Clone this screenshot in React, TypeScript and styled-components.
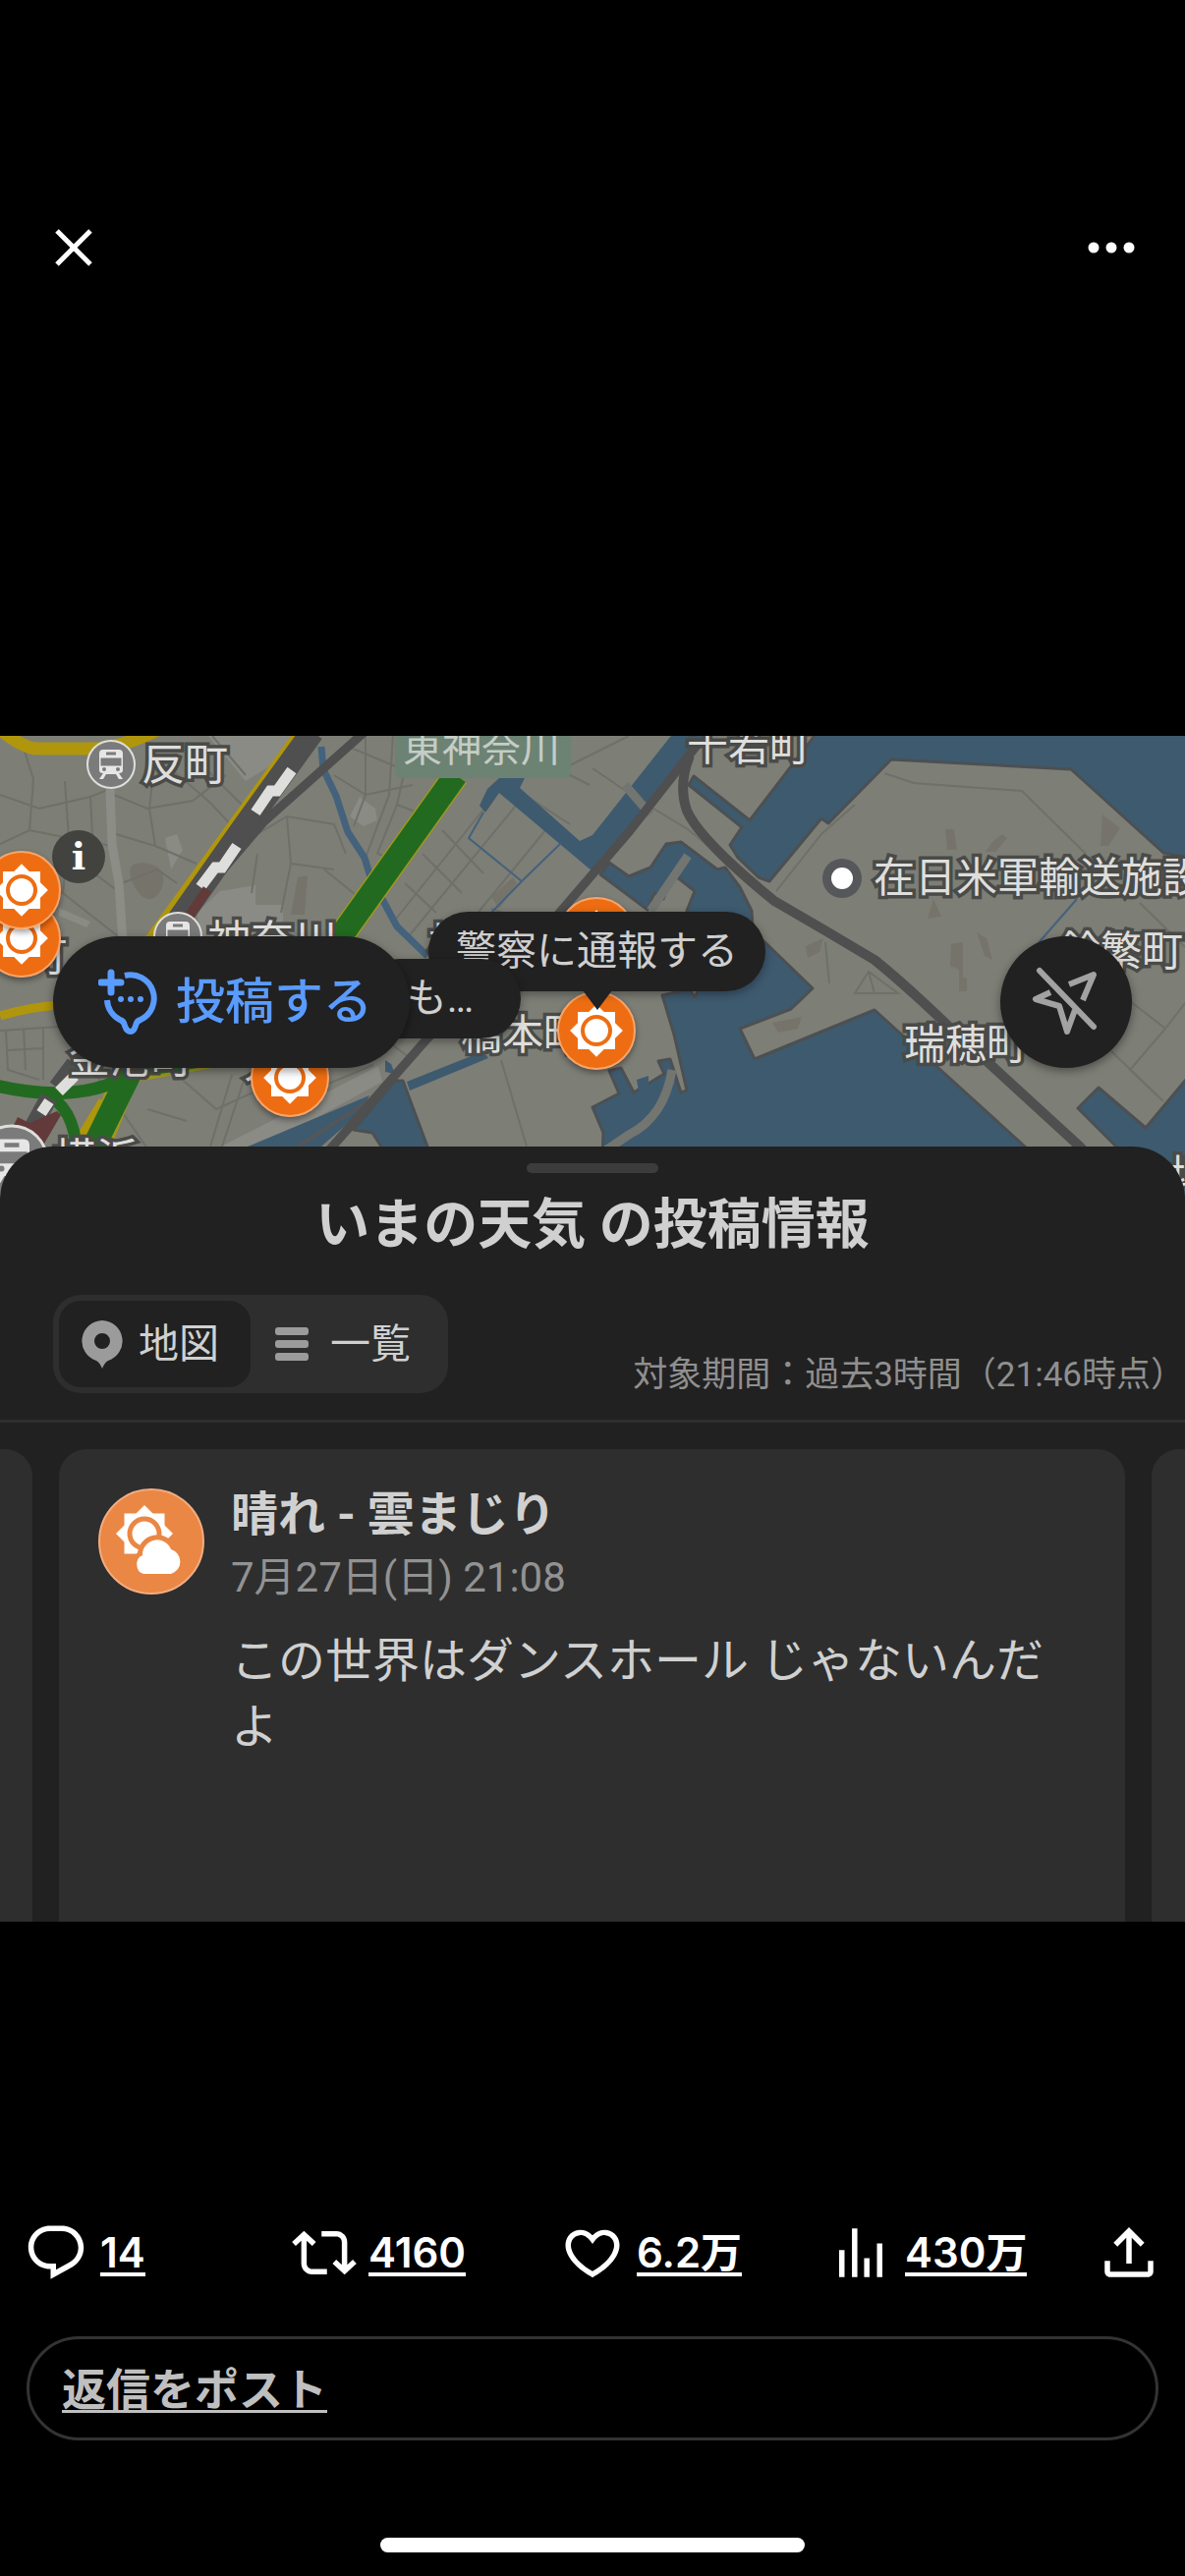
import { useState } from "react";
import styled, { createGlobalStyle, css } from "styled-components";

const GlobalStyle = createGlobalStyle`
  * {
    box-sizing: border-box;
  }
  body {
    margin: 0;
    background-color: black;
    font-family: Roboto, "Noto Sans CJK JP", sans-serif;
  }
  button {
    padding: 0;
    border: none;
    background: none;
    color: inherit;
    font-family: inherit;
    cursor: pointer;
  }
`;

const Page = styled.div`
  min-height: 100vh;
  display: flex;
  flex-direction: column;
  background-color: black;
  color: white;
  overflow: hidden;
`;
const Header = styled.header`
  display: flex;
  justify-content: space-between;
  padding: 218px 42px 0;
`;
const IconBTN = styled.button`
  width: 66px;
  height: 66px;
  svg {
    display: block;
  }
`;
const Media = styled.main`
  margin-top: 465px;
  background-color: #212121;
`;

// map
const MapArea = styled.section`
  position: relative;
  height: 472px;
  overflow: hidden;
  background-color: #7d7e76;
`;
const MapCanvas = styled.svg`
  display: block;
  width: 100%;
  height: 100%;
`;
const MapLabel = styled.span<{ $x: number; $y: number; $big?: boolean }>`
  position: absolute;
  left: ${(props) => props.$x}px;
  top: ${(props) => props.$y}px;
  font-family: "Noto Sans CJK JP", sans-serif;
  font-size: ${(props) => (props.$big ? 44 : 42)}px;
  line-height: 48px;
  white-space: nowrap;
  color: #dededc;
  -webkit-text-stroke: 7px #4a4b48;
  paint-order: stroke fill;
`;
const AreaLabel = styled(MapLabel)`
  color: #c4cdc6;
  font-size: 40px;
  -webkit-text-stroke: 0;
`;
const Pin = styled.div<{ $x: number; $y: number; $size: number }>`
  position: absolute;
  left: ${(props) => props.$x - props.$size / 2}px;
  top: ${(props) => props.$y - props.$size / 2}px;
  width: ${(props) => props.$size}px;
  height: ${(props) => props.$size}px;
  svg {
    display: block;
    width: 100%;
    height: 100%;
  }
`;
const WeatherPin = styled(Pin)`
  border-radius: 50%;
  box-shadow: 0 3px 6px rgba(0, 0, 0, 0.4);
`;
const InfoBTN = styled.button`
  position: absolute;
  left: 53px;
  top: 96px;
  width: 54px;
  height: 54px;
  border-radius: 50%;
  background-color: #42433f;
  color: white;
  font-family: "DejaVu Serif", serif;
  font-size: 38px;
  font-weight: bold;
  line-height: 54px;
`;
const Bubble = styled.div<{ $x: number; $y: number; $w: number }>`
  position: absolute;
  left: ${(props) => props.$x}px;
  top: ${(props) => props.$y}px;
  width: ${(props) => props.$w}px;
  height: 81px;
  border-radius: 41px;
  background-color: #212121;
  color: #cfcfcf;
  font-size: 41px;
  line-height: 80px;
  text-align: center;
  white-space: nowrap;
  box-shadow: 0 3px 10px rgba(0, 0, 0, 0.35);
`;
const Arrow = styled.i`
  position: absolute;
  left: 50%;
  top: 80px;
  margin-left: -15px;
  border: 15px solid transparent;
  border-top: 20px solid #212121;
  border-bottom: none;
`;
// bar with the round buttons, lies over the map
const MapButtons = styled.div`
  position: absolute;
  left: 0;
  right: 0;
  bottom: 134px;
  display: flex;
  justify-content: space-between;
  padding: 0 54px;
`;
const PostBTN = styled.button`
  display: flex;
  align-items: center;
  gap: 19px;
  width: 363px;
  height: 134px;
  padding-left: 46px;
  border-radius: 67px;
  background-color: #212121;
  color: #5a9bff;
  font-size: 50px;
  font-weight: 500;
  line-height: 60px;
  box-shadow: 0 3px 10px rgba(0, 0, 0, 0.4);
`;
const LocateBTN = styled.button`
  display: flex;
  justify-content: center;
  align-items: center;
  width: 134px;
  height: 134px;
  border-radius: 50%;
  background-color: #212121;
  box-shadow: 0 3px 10px rgba(0, 0, 0, 0.4);
`;

// sheet
const Sheet = styled.section`
  position: relative;
  margin-top: -54px;
  padding-top: 17px;
  border-radius: 54px 54px 0 0;
  background-color: #212121;
  color: #d0d0d0;
`;
const Handle = styled.div`
  width: 134px;
  height: 10px;
  margin: 0 auto;
  border-radius: 5px;
  background-color: #3c3c3c;
`;
const Title = styled.h1`
  margin: 20px 0 0;
  font-size: 55px;
  font-weight: 700;
  line-height: 64px;
  text-align: center;
`;
const Tools = styled.div`
  display: flex;
  justify-content: space-between;
  align-items: flex-end;
  margin-top: 40px;
  padding: 0 0 27px 54px;
  border-bottom: 3px solid #2e2e2e;
`;
const Tabs = styled.div`
  display: flex;
  padding: 6px;
  border-radius: 28px;
  background-color: #2e2e2e;
`;
const Tab = styled.button<{ $active: boolean }>`
  display: flex;
  align-items: center;
  gap: 16px;
  width: 195px;
  height: 88px;
  padding-left: 23px;
  border-radius: 22px;
  font-size: 41px;
  line-height: 48px;
  ${(props) =>
    props.$active &&
    css`
      background-color: #212121;
    `}
`;
const Period = styled.p`
  margin: 0;
  color: #8f8f8f;
  font-size: 35px;
  line-height: 36px;
`;
const Cards = styled.div`
  display: grid;
  grid-template-columns: 33px 1fr 34px;
  gap: 27px;
  padding-top: 27px;
`;
const Card = styled.article`
  display: flex;
  gap: 27px;
  min-height: 481px;
  padding: 40px;
  border-radius: 28px 28px 0 0;
  background-color: #2e2e2e;
  svg {
    flex: none;
  }
`;
const SideCard = styled.div<{ $side: "left" | "right" }>`
  background-color: #2e2e2e;
  border-radius: ${(props) =>
    props.$side === "left" ? "0 28px 0 0" : "28px 0 0 0"};
`;
const CardTitle = styled.h2`
  margin: 0;
  font-size: 48px;
  font-weight: 700;
  line-height: 54px;
`;
const CardDate = styled.p`
  margin: 14px 0 0;
  color: #929292;
  font-size: 42px;
  line-height: 46px;
`;
const CardText = styled.p`
  margin: 28px 0 0;
  font-size: 48px;
  line-height: 67px;
`;

// footer
const Footer = styled.footer`
  margin-top: auto;
  padding-bottom: 24px;
`;
const Actions = styled.div`
  display: grid;
  grid-template-columns: repeat(4, 1fr) 66px;
  padding: 0 24px;
`;
const Action = styled.button`
  display: flex;
  align-items: center;
  gap: 12px;
  height: 66px;
  svg {
    flex: none;
    fill: white;
  }
`;
const Count = styled.span`
  padding-top: 4px;
  border-bottom: 4px solid white;
  font-family: Inter, "Noto Sans CJK JP", sans-serif;
  font-size: 42px;
  font-weight: 600;
  line-height: 40px;
`;
const Reply = styled.input`
  display: block;
  width: calc(100% - 54px);
  height: 106px;
  margin: 52px 27px 99px;
  padding: 0 33px 4px;
  border: 3px solid #333;
  border-radius: 53px;
  background: none;
  color: white;
  font-family: "Noto Sans CJK JP", sans-serif;
  font-size: 45px;
  font-weight: 700;
  outline: none;
  &::placeholder {
    color: #bfbfbf;
    opacity: 1;
    text-decoration: underline;
    text-decoration-thickness: 3px;
    text-underline-offset: 4px;
    text-decoration-skip-ink: none;
  }
`;
const HomeBar = styled.div`
  width: 432px;
  height: 15px;
  margin: 0 auto;
  border-radius: 8px;
  background-color: white;
`;

const water = "#3e5a6f";
const rail = "#4f4f4f";

// thin streets, only for texture
const streets = [
  "M0 60L40 74L92 62L112 54M0 110L30 96L70 104L114 112M20 0L34 44L30 96",
  "M66 46L70 104L64 160M92 62L96 140L120 158M0 176L44 150L64 160L120 204",
  "M116 60L150 74L196 66L230 40M118 100L158 112L200 130M158 20L152 74L158 112",
  "M124 150L160 136L180 150M170 30L214 68L240 96M186 10L250 74M216 0L250 40",
  "M262 100L292 82L340 90L352 120M292 82L296 130L286 180M262 120L256 160M296 130L340 136",
  "M330 136L372 170M340 40L372 60L420 50M372 0L372 60L360 92M400 0L396 60L372 124",
  "M352 10L400 30L452 40M420 0L404 70L384 120M404 70L440 84M384 120L414 130",
  "M400 190L520 40M416 204L534 60M430 120L470 160M450 96L492 140M412 150L444 180",
  "M470 200L560 90M500 176L560 196M560 40L640 0M534 60L580 90M540 20L600 50",
  "M0 300L60 296M6 300L8 340L40 350M24 298L26 340M44 296L44 350M8 320L44 318",
  "M60 290L150 420M180 345L220 380L330 330M236 345L214 418M250 345L226 418M150 380L190 392",
  "M300 335L320 360L380 335M510 330L536 418M440 300L520 290M380 300L420 330",
  "M603 33L650 65L700 95L752 138M790 158L836 100L870 70M900 38L930 48L1040 56L1105 120",
  "M1160 170L1206 215M840 210L844 252M870 262L884 240L914 262ZM884 240L890 262",
  "M1150 270L1186 298L1150 340L1184 372M1186 298L1206 272M1130 320L1184 372",
];

const MapDrawing = () => (
  <MapCanvas viewBox="0 0 1206 472" preserveAspectRatio="xMidYMid slice" aria-hidden="true">
    <rect width="1206" height="472" fill="#7d7e76" />
    <g fill="#8a8b85">
      <path d="M212 0h90l-16 24-36 22zM366 62l16 12 2 12-14 6-14-10zM224 158l36-6v20h28v32h-84l-4-24zM168 104l12-4 6 16-12 20z" />
      <path d="M60 175l32 14-4 6-28-12zM225 418l160-82 4 16-120 66z" />
    </g>
    <g fill="#76746a">
      <path d="M962 95h9l3 21h-10zM1010 108l10-8 5 4-12 14h-10zM950 166l8 18-14 2zM968 212l12-2v36h4v14h-8v-22l-9-4zM994 200l10 6 6 22-8-4zM1122 80l18 14-12 18h-8zM786 292l30-6-4 12-20 4zM820 214l18-8-4 14-12 6zM303 144l10-2-3 40h-14zM134 132c8-6 30-2 32 10s-6 26-16 24-22-24-16-34zM500 164l22-20 4 6-18 26z" />
    </g>
    <g fill="none" stroke="#6f7069" strokeWidth="2">
      {streets.map((d) => (
        <path key={d} d={d} />
      ))}
    </g>
    <path d="M112 54L114 110L121 150L125 210" fill="none" stroke="#8d8d88" strokeWidth="9" />

    <g fill={water} stroke="#4c5052" strokeWidth="3" strokeLinejoin="round">
      <path d="M832 -4L763 86L706 41L701 50L755 93L743 111L751 124L772 144L783 148L836 84L843 89L907 24L1090 34L1184 119L1212 124V-4Z" />
      <path d="M611 141L659 177L666 160L675 166L680 150L688 143L707 158L699 178L700 230L712 256L707 266L702 258L674 264L686 304L699 361L693 363L682 329L670 331L676 344L645 363L632 338L620 341L630 364L603 378L614 404L611 480L1104 480L1043 418L890 279L768 329L753 298L805 278L827 257L766 198L765 178L753 154L738 134L730 136L693 108L678 110L662 134L640 143L620 129Z" />
      <path d="M1212 344L1166 399L1118 358L1097 379L1136 418L1190 480H1212Z" />
      <path d="M402 351L410 351L435 418L444 450H400L388 418L379 404L360 401Z" />
    </g>
    <g fill={water}>
      <path d="M508 43H534L529 53L590 107L603 101L686 -4H720L705 18L603 138L508 58L494 78L488 71L496 54Z" />
      <path d="M414 352L492 321L497 328L417 361ZM392 330l6 4 4 10-10-2zM252 418L376 366L368 382L320 424H250ZM648 350l12-4v10l-10 6z" />
    </g>
    <path d="M612 425L640 406Q676 388 684 340M700 122L662 178M636 50L662 80" fill="none" stroke="#737570" strokeWidth="9" />
    <path d="M300 420L384 366" stroke="#53565a" strokeWidth="4" />
    <g fill="none" stroke="#44627c">
      <path d="M327 11L329 34L342 61L354 98L371 124L377 144L390 168L404 194L435 224" strokeWidth="7" />
      <path d="M492 78L477 104L531 148L500 180M571 109L531 148" strokeWidth="2" />
      <path d="M1096 166L1054 214" strokeWidth="2" />
    </g>

    {/* roads */}
    <g fill="none" stroke="#b0960c">
      <path d="M-4 -10Q24 14 40 13H90Q120 14 160 -6" strokeWidth="13" />
      <path d="M304 -4L146 214" strokeWidth="8" />
      <path d="M0 285Q30 276 60 274" strokeWidth="9" />
      <path d="M106 372L80 415M118 385L104 425" strokeWidth="12" />
    </g>
    <path d="M464 40L334 222L240 320L130 340L96 425" fill="none" stroke="#9f981c" strokeWidth="27" />
    <g fill="none" stroke="#226a20">
      <path d="M464 40L334 222L240 320L136 336L92 425" strokeWidth="24" />
      <path d="M-4 356Q80 376 134 344" strokeWidth="13" />
      <path d="M44 364Q76 376 78 425" strokeWidth="12" />
    </g>

    {/* railways */}
    <g fill="none" stroke={rail}>
      <path d="M318 -4L246 96L180 190" strokeWidth="24" />
      <path d="M371 -4L268 88L220 144" strokeWidth="9" />
      <path d="M712 6L640 98L566 184L435 308L326 432" strokeWidth="9" />
      <path d="M702 20Q690 50 699 76Q712 106 788 168Q840 198 890 228Q920 252 968 298L1099 418L1150 472" strokeWidth="10" />
      <path d="M76 334L58 358M50 368L28 408" strokeWidth="18" />
    </g>
    <g fill="none" stroke="#dededc" strokeWidth="11">
      <path d="M297 35L282 56L275 56L260 78M241 112L226 134L219 134L204 154M76 346L60 362M50 372L42 384" />
    </g>
    <path d="M211 156L192 184" stroke="#633a3a" strokeWidth="10" />
    <path d="M8 408L18 388L30 394L58 382L62 386L42 420H10Z" fill="#633a3a" />

    <rect x="402" y="-6" width="179" height="49" rx="6" fill="#6c8273" />
    <circle cx="857" cy="145" r="20" fill="#56575a" />
    <circle cx="857" cy="145" r="11" fill="white" />
  </MapCanvas>
);

// two squares, one turned by 45deg, make the rays
const Rays = () => (
  <g fill="white">
    <rect x="-19" y="-19" width="38" height="38" />
    <rect x="-19" y="-19" width="38" height="38" transform="rotate(45)" />
  </g>
);
const SunIcon = () => (
  <svg viewBox="-40 -40 80 80" aria-hidden="true">
    <circle r="39" fill="#ee6d12" stroke="#f9a468" strokeWidth="2" />
    <Rays />
    <circle r="14" fill="white" stroke="#ee6d12" strokeWidth="4" />
  </svg>
);
const SunCloudIcon = () => (
  <svg width="108" height="108" viewBox="0 0 108 108" role="img" aria-label="晴れ">
    <circle cx="54" cy="54" r="53" fill="#ea8744" stroke="#f3ac80" strokeWidth="2" />
    <g transform="translate(47 46)">
      <g transform="scale(1.08)">
        <Rays />
      </g>
      <circle r="15" fill="white" stroke="#ea8744" strokeWidth="5" />
    </g>
    <path
      d="M46 87a9 10 0 0 1-1-19a15 15 0 0 1 29-6a13 13 0 0 1 0 25z"
      fill="white"
      stroke="#ea8744"
      strokeWidth="10"
    />
    <path d="M46 87a9 10 0 0 1-1-19a15 15 0 0 1 29-6a13 13 0 0 1 0 25z" fill="white" />
  </svg>
);
const TrainIcon = () => (
  <svg viewBox="-26 -26 52 52" aria-hidden="true">
    <circle r="24" fill="#7b7b7b" stroke="#dededc" strokeWidth="2" />
    <path
      d="M-8 -15H8Q12 -15 12 -11V6Q12 9 8 9L12 15H8L5 10H-5L-8 15H-12L-8 9Q-12 9 -12 6V-11Q-12 -15 -8 -15Z"
      fill="#e6e6e6"
    />
    <path d="M-5 -11H5M-9 -5H9V0H-9Z" stroke="#7b7b7b" strokeWidth="3" fill="#7b7b7b" />
    <circle cx="-7" cy="5" r="2" fill="#7b7b7b" />
    <circle cx="7" cy="5" r="2" fill="#7b7b7b" />
  </svg>
);
const PostIcon = () => (
  <svg width="60" height="68" viewBox="0 0 60 68" aria-hidden="true">
    <g fill="none" stroke="#5a9bff" strokeWidth="6">
      <path d="M13 4V24M3 14H23" strokeWidth="7" strokeLinecap="round" />
      <path d="M27 7A24 24 0 0 1 43 52Q39 53 38 58Q36 64 33 64Q29 64 27 58Q26 53 22 52A24 24 0 0 1 9 32" />
    </g>
    <g fill="#5a9bff">
      <circle cx="23" cy="31" r="3" />
      <circle cx="33" cy="31" r="3" />
      <circle cx="43" cy="31" r="3" />
    </g>
  </svg>
);
const LocateOffIcon = () => (
  <svg width="80" height="80" viewBox="0 0 80 80" aria-hidden="true">
    <g fill="none" stroke="#a2a2a2" strokeWidth="6" strokeLinejoin="round">
      <path d="M13 8L68 65" strokeLinecap="round" />
      <path d="M43 22L68 12L57 38M24 30L9 37L33 44L41 70L49 48" />
    </g>
  </svg>
);
const PinIcon = () => (
  <svg width="42" height="50" viewBox="0 0 42 50" aria-hidden="true">
    <path
      d="M21 1a21 21 0 0 1 6 41q-3 1-6 8q-3-7-6-8a21 21 0 0 1 6-41zM21 14a8 8 0 1 0 0 16a8 8 0 0 0 0-16z"
      fill="#9b9b9b"
    />
  </svg>
);
const ListIcon = () => (
  <svg width="42" height="34" viewBox="-2 0 42 34" aria-hidden="true">
    <g fill="#9b9b9b">
      <rect y="0" width="34" height="8" rx="3" />
      <rect y="13" width="34" height="8" rx="3" />
      <rect y="26" width="34" height="8" rx="3" />
    </g>
  </svg>
);

const actions = [
  {
    name: "返信",
    count: "14",
    d: "M1.751 10c0-4.42 3.584-8 8.005-8h4.366c4.49 0 8.129 3.64 8.129 8.13 0 2.96-1.607 5.68-4.196 7.11l-8.054 4.46v-3.69h-.067c-4.49.1-8.183-3.51-8.183-8.01zm8.005-6c-3.317 0-6.005 2.69-6.005 6 0 3.37 2.77 6.08 6.138 6.01l.351-.01h1.761v2.3l5.087-2.81c1.951-1.08 3.163-3.13 3.163-5.36 0-3.39-2.744-6.13-6.129-6.13H9.756z",
  },
  {
    name: "リポスト",
    count: "4160",
    d: "M4.5 3.88l4.432 4.14-1.364 1.46L5.5 7.55V16c0 1.1.896 2 2 2H13v2H7.5c-2.209 0-4-1.79-4-4V7.55L1.432 9.48.068 8.02 4.5 3.88zM16.5 6H11V4h5.5c2.209 0 4 1.79 4 4v8.45l2.068-1.93 1.364 1.46-4.432 4.14-4.432-4.14 1.364-1.46 2.068 1.93V8c0-1.1-.896-2-2-2z",
  },
  {
    name: "いいね",
    count: "6.2万",
    d: "M16.697 5.5c-1.222-.06-2.679.51-3.89 2.16l-.805 1.09-.806-1.09C9.984 6.01 8.526 5.44 7.304 5.5c-1.243.07-2.349.78-2.91 1.91-.552 1.12-.633 2.78.479 4.82 1.074 1.97 3.257 4.27 7.129 6.61 3.87-2.34 6.052-4.64 7.126-6.61 1.111-2.04 1.03-3.7.477-4.82-.561-1.13-1.666-1.84-2.908-1.91zm4.187 7.69c-1.351 2.48-4.001 5.12-8.379 7.67l-.503.3-.504-.3c-4.379-2.55-7.029-5.19-8.382-7.67-1.36-2.5-1.41-4.86-.514-6.67.887-1.79 2.647-2.91 4.601-3.01 1.651-.09 3.368.56 4.798 2.01 1.429-1.45 3.146-2.1 4.796-2.01 1.954.1 3.714 1.22 4.601 3.01.896 1.81.846 4.17-.514 6.67z",
  },
  {
    name: "表示",
    count: "430万",
    d: "M8.75 21V3h2v18h-2zM18 21V8.5h2V21h-2zM4 21l.004-10h2L6 21H4zm9.248 0v-7h2v7h-2z",
  },
  {
    name: "共有",
    count: "",
    d: "M12 2.59l5.7 5.7-1.41 1.42L13 6.41V16h-2V6.41l-3.3 3.3-1.41-1.42L12 2.59zM21 15v4c0 1.1-.9 2-2 2H5c-1.1 0-2-.9-2-2v-4h2v4h14v-4h2z",
  },
];

const labels = [
  { text: "反町", x: 144, y: 2, big: true },
  { text: "千若町", x: 699, y: -17 },
  { text: "在日米軍輸送施設", x: 889, y: 117 },
  { text: "鈴繁町", x: 1078, y: 192 },
  { text: "瑞穂町", x: 920, y: 287 },
  { text: "神奈川", x: 211, y: 182, big: true },
  { text: "町", x: 26, y: 197 },
  { text: "松", x: 436, y: 184 },
  { text: "橋本町", x: 469, y: 277 },
  { text: "金港町", x: 70, y: 301 },
  { text: "大", x: 248, y: 306 },
  { text: "横浜", x: 54, y: 404, big: true },
  { text: "埠", x: 1190, y: 420 },
];
const stations = [
  { x: 113, y: 29, size: 52 },
  { x: 181, y: 204, size: 52 },
  { x: 12, y: 433, size: 78 },
];
const suns = [
  { x: 22, y: 206 },
  { x: 22, y: 157 },
  { x: 295, y: 348 },
  { x: 607, y: 204 },
  { x: 607, y: 300 },
];

function App() {
  const [view, setView] = useState("map");

  return (
    <Page>
      <GlobalStyle />
      <Header>
        <IconBTN aria-label="閉じる">
          <svg width="66" height="66" viewBox="0 0 66 66">
            <path d="M16 17L50 51M50 17L16 51" stroke="white" strokeWidth="5" />
          </svg>
        </IconBTN>
        <IconBTN aria-label="その他">
          <svg width="66" height="66" viewBox="0 0 66 66" fill="white">
            <circle cx="15" cy="34" r="5.5" />
            <circle cx="33" cy="34" r="5.5" />
            <circle cx="51" cy="34" r="5.5" />
          </svg>
        </IconBTN>
      </Header>
      <Media>
        <MapArea>
          <MapDrawing />
          <AreaLabel $x={410} $y={-15}>東神奈川</AreaLabel>
          {labels.map((label) => (
            <MapLabel key={label.text} $x={label.x} $y={label.y} $big={label.big}>
              {label.text}
            </MapLabel>
          ))}
          {stations.map((station) => (
            <Pin key={station.x} $x={station.x} $y={station.y} $size={station.size}>
              <TrainIcon />
            </Pin>
          ))}
          <InfoBTN aria-label="情報">i</InfoBTN>
          {suns.map((sun) => (
            <WeatherPin key={`${sun.x}-${sun.y}`} $x={sun.x} $y={sun.y} $size={80}>
              <SunIcon />
            </WeatherPin>
          ))}
          <Bubble $x={436} $y={179} $w={343}>
            警察に通報する
            <Arrow />
          </Bubble>
          <Bubble $x={366} $y={227} $w={164}>
            も…
          </Bubble>
          <MapButtons>
            <PostBTN>
              <PostIcon />
              投稿する
            </PostBTN>
            <LocateBTN aria-label="現在地">
              <LocateOffIcon />
            </LocateBTN>
          </MapButtons>
        </MapArea>
        <Sheet>
          <Handle />
          <Title>いまの天気 の投稿情報</Title>
          <Tools>
            <Tabs>
              <Tab $active={view === "map"} onClick={() => setView("map")}>
                <PinIcon />
                地図
              </Tab>
              <Tab $active={view === "list"} onClick={() => setView("list")}>
                <ListIcon />
                一覧
              </Tab>
            </Tabs>
            <Period>対象期間：過去3時間（21:46時点）</Period>
          </Tools>
          <Cards>
            <SideCard $side="left" />
            <Card>
              <SunCloudIcon />
              <div>
                <CardTitle>晴れ - 雲まじり</CardTitle>
                <CardDate>7月27日(日) 21:08</CardDate>
                <CardText>この世界はダンスホール じゃないんだよ</CardText>
              </div>
            </Card>
            <SideCard $side="right" />
          </Cards>
        </Sheet>
      </Media>
      <Footer>
        <Actions>
          {actions.map((action) => (
            <Action key={action.name} aria-label={action.name}>
              <svg width="66" height="66" viewBox="0 0 24 24">
                <path d={action.d} />
              </svg>
              {action.count && <Count>{action.count}</Count>}
            </Action>
          ))}
        </Actions>
        <Reply type="text" placeholder="返信をポスト" aria-label="返信をポスト" />
        <HomeBar />
      </Footer>
    </Page>
  );
}

export default App;
